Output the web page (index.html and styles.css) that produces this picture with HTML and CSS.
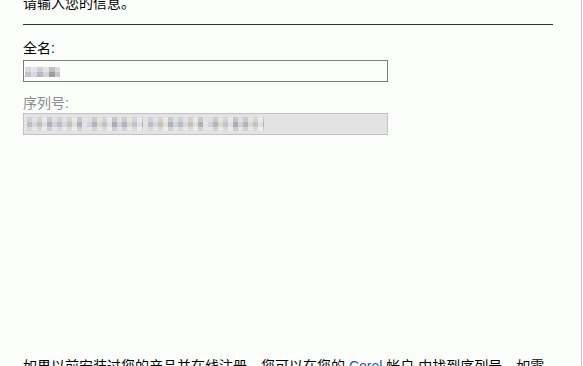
FILE: index.html
```html
<!DOCTYPE html>
<html lang="zh-CN">
<head>
<meta charset="utf-8">
<title>请输入您的信息</title>
<link rel="stylesheet" href="styles.css">
</head>
<body>
<main class="page">
  <h1 class="title">请输入您的信息。</h1>
  <hr class="rule">
  <div class="field">
    <label class="label">全名:</label>
    <div class="box"><span class="mosaic mosaic-name" aria-hidden="true"></span></div>
  </div>
  <div class="field field-disabled">
    <label class="label">序列号:</label>
    <div class="box box-disabled">
      <span class="mosaic mosaic-group" aria-hidden="true"></span>
      <span class="mosaic mosaic-group mosaic-b" aria-hidden="true"></span>
      <span class="mosaic mosaic-group" aria-hidden="true"></span>
      <span class="mosaic mosaic-group mosaic-b" aria-hidden="true"></span>
    </div>
  </div>
  <p class="note">如果以前安装过您的产品并在线注册，您可以在您的 <a class="link" href="#">Corel</a> 帐户 中找到序列号。如需帮助，请联系客户支持。</p>
</main>
</body>
</html>
```

FILE: styles.css
```css
html {
  background: #ffffff;
}

body {
  margin: 0;
  width: 581px;
  height: 366px;
  overflow: hidden;
  border-right: 1px solid #c4c4cc;
  background: #fbfdfb;
  font-family: "Liberation Sans", "Noto Sans CJK SC", sans-serif;
  font-size: 14px;
  line-height: 18px;
  color: #000;
}

.page {
  margin-top: -6px;
  padding-left: 23px;
  width: 530px;
}

.title {
  margin: 0;
  font-size: 14px;
  font-weight: normal;
  line-height: 18px;
}

.rule {
  margin: 12px 0 0;
  height: 0;
  border: 0;
  border-top: 1px solid #333;
}

.label {
  display: block;
  margin-top: 14px;
}

.box {
  box-sizing: border-box;
  width: 365px;
  height: 22px;
  margin-top: 3px;
  padding: 6px 1px 0;
  border: 1px solid #7b7b7b;
  background: #fcfefc;
}

.field-disabled .label {
  margin-top: 12px;
  color: #8c8c8c;
}

.box-disabled {
  display: flex;
  gap: 5px;
  margin-top: 1px;
  padding: 3px 3px 0;
  border-color: #c3c3c3;
  background: #e3e3e3;
}

.mosaic {
  display: block;
}

.mosaic-name {
  width: 35px;
  height: 10px;
  background:
    linear-gradient(180deg, rgba(255,255,255,0.35) 0 5px, rgba(0,0,0,0) 5px),
    linear-gradient(90deg, #c4c4d0 0 6px, #d8d4e4 6px 12px, #b8b8c0 12px 18px, #d4d4d8 18px 24px, #9e9ea6 24px 30px, #c8c8cc 30px 35px);
}

.mosaic-group {
  width: 55px;
  height: 14px;
  background:
    linear-gradient(180deg, rgba(255,255,255,0.3) 0 5px, rgba(0,0,0,0) 5px 10px, rgba(255,255,255,0.4) 10px),
    repeating-linear-gradient(90deg, #bcbcc6 0 5px, #d6d6dc 5px 10px, #c6bfb6 10px 15px, #dedede 15px 20px, #b0b0b8 20px 25px, #d0d4d8 25px 30px);
}

.mosaic-b {
  width: 56px;
  background:
    linear-gradient(180deg, rgba(255,255,255,0.3) 0 5px, rgba(0,0,0,0) 5px 10px, rgba(255,255,255,0.4) 10px),
    repeating-linear-gradient(90deg, #d2d2d8 0 5px, #b4b4be 5px 10px, #dcd8cc 10px 15px, #c0c4c8 15px 20px, #e0e0e0 20px 25px, #acacb4 25px 30px);
}

.note {
  margin: 222px 0 0;
}

.link {
  color: #2456b0;
  text-decoration: none;
}
```
